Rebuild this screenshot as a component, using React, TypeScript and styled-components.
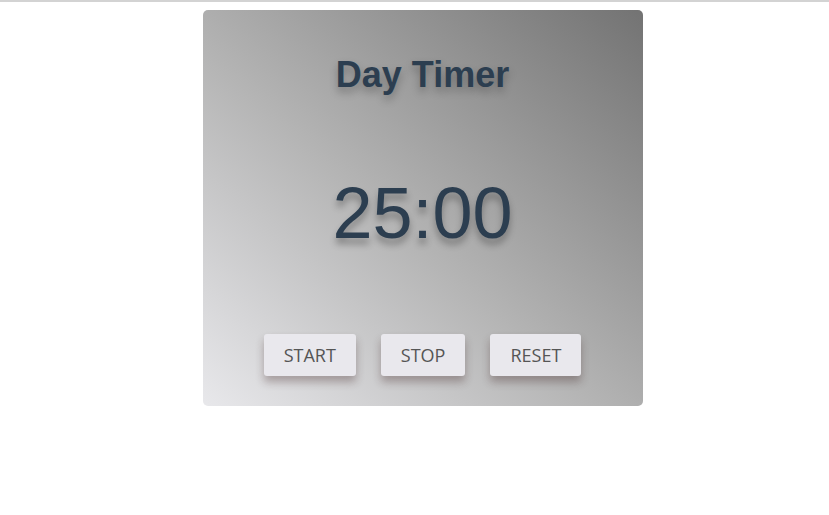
import styled, { createGlobalStyle } from 'styled-components';

const GlobalStyle = createGlobalStyle`
  html, body {
    margin: 0;
    padding: 0;
    background: #ffffff;
  }
  body {
    font-family: 'Liberation Sans', Arial, sans-serif;
  }
`;

const Page = styled.div`
  min-height: 515px;
  border-top: 2px solid #d3d3d3;
  box-sizing: border-box;
  display: flex;
  justify-content: center;
  padding: 8px 0 0 16px;
`;

const Card = styled.div`
  width: 440px;
  height: 396px;
  box-sizing: border-box;
  border-radius: 5px;
  background: linear-gradient(to top right, #e8e8eb 0%, #b4b4b4 45%, #737373 100%);
  display: flex;
  flex-direction: column;
  align-items: center;
  padding-top: 44px;
`;

const Title = styled.h1`
  margin: 0;
  font-family: 'Liberation Sans', Arial, sans-serif;
  font-size: 36px;
  font-weight: 700;
  color: #2c3e50;
  text-shadow: 0 5px 8px rgba(0, 0, 0, 0.28);
`;

const Clock = styled.div`
  margin-top: 76px;
  font-family: 'Liberation Sans', Arial, sans-serif;
  font-size: 72px;
  font-weight: 400;
  color: #2c3e50;
  text-shadow: 0 6px 7px rgba(0, 0, 0, 0.3);
`;

const Controls = styled.div`
  margin-top: 80px;
  display: flex;
  gap: 25px;
`;

const Button = styled.button`
  height: 42px;
  padding: 0 20px;
  border: none;
  border-radius: 3px;
  background: #e9e8ed;
  color: #555555;
  font-family: 'Open Sans', 'Noto Sans', sans-serif;
  font-size: 18px;
  box-shadow: 0 6px 9px rgba(60, 30, 30, 0.32);
  cursor: pointer;
`;

export default function App() {
  return (
    <>
      <GlobalStyle />
      <Page>
        <Card>
          <Title>Day Timer</Title>
          <Clock>25:00</Clock>
          <Controls>
            <Button>START</Button>
            <Button>STOP</Button>
            <Button>RESET</Button>
          </Controls>
        </Card>
      </Page>
    </>
  );
}
